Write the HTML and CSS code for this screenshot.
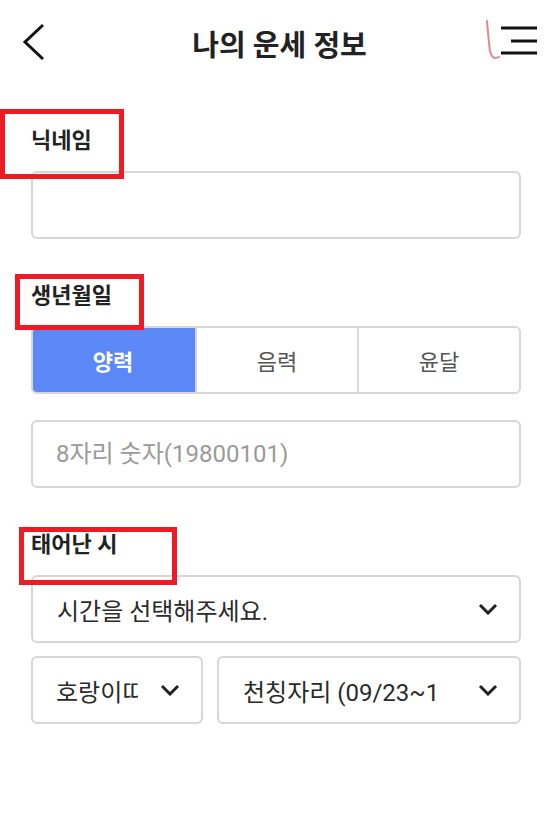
FILE: index.html
```html
<!DOCTYPE html>
<html lang="ko">
<head>
    <meta charset="UTF-8">
    <meta name="viewport" content="width=device-width, initial-scale=1.0">
    <title>나의 운세 정보</title>
    <link rel="stylesheet" href="styles.css">
</head>
<body>
    <header class="topbar">
        <a class="back" href="#">
            <svg width="24" height="40" viewBox="0 0 24 40"><polyline points="21,3 3,20 21,37" fill="none" stroke="#111" stroke-width="3"/></svg>
        </a>
        <h1 class="title">나의 운세 정보</h1>
        <div class="menu">
            <svg class="pen" width="20" height="44" viewBox="0 0 20 44"><path d="M2 2 C3 14 4 26 5 32 C6 36 8 39 10 39 C12 39 13 38 14 38" fill="none" stroke="#e0707a" stroke-width="2" stroke-linecap="round" opacity="0.85"/></svg>
            <svg width="36" height="32" viewBox="0 0 36 32"><g stroke="#111" stroke-width="3"><line x1="0" y1="3" x2="36" y2="3"/><line x1="10" y1="16" x2="36" y2="16"/><line x1="0" y1="28" x2="36" y2="28"/></g></svg>
        </div>
    </header>

    <main class="form">
        <section class="field">
            <div class="label">닉네임<span class="mark mark-nick"></span></div>
            <input class="box" type="text">
        </section>

        <section class="field">
            <div class="label">생년월일<span class="mark mark-birth"></span></div>
            <div class="segments">
                <button class="seg active">양력</button>
                <button class="seg">음력</button>
                <button class="seg">윤달</button>
            </div>
            <input class="box birth" type="text" placeholder="8자리 숫자(19800101)">
        </section>

        <section class="field">
            <div class="label">태어난 시<span class="mark mark-time"></span></div>
            <div class="select">
                <span class="select-text">시간을 선택해주세요.</span>
                <svg class="caret" width="20" height="12" viewBox="0 0 20 12"><polyline points="2,2 10,10 18,2" fill="none" stroke="#222" stroke-width="3"/></svg>
            </div>
            <div class="select-row">
                <div class="select small">
                    <span class="select-text">호랑이띠</span>
                    <svg class="caret" width="20" height="12" viewBox="0 0 20 12"><polyline points="2,2 10,10 18,2" fill="none" stroke="#222" stroke-width="3"/></svg>
                </div>
                <div class="select wide">
                    <span class="select-text">천칭자리 (09/23~10/22)</span>
                    <svg class="caret" width="20" height="12" viewBox="0 0 20 12"><polyline points="2,2 10,10 18,2" fill="none" stroke="#222" stroke-width="3"/></svg>
                </div>
            </div>
        </section>
    </main>
</body>
</html>
```

FILE: styles.css
```css
body {
    margin: 0;
    background-color: #fff;
    color: #222;
    font-family: Roboto, "Noto Sans CJK KR", sans-serif;
}
.topbar {
    display: grid;
    grid-template-columns: 1fr auto 1fr;
    align-items: center;
    height: 84px;
    padding: 0 11px 0 22px;
}
.back {
    display: flex;
    align-items: center;
}
.title {
    margin: 0;
    font-size: 29px;
    font-weight: 700;
    color: #222;
    padding-top: 2px;
}
.menu {
    justify-self: end;
    position: relative;
    display: flex;
    padding-bottom: 2px;
}
.pen {
    position: absolute;
    left: -16px;
    top: -6px;
}
.form {
    padding: 0 27px 0 31px;
}
.field {
    margin-top: 42px;
}
.label {
    position: relative;
    font-size: 22px;
    font-weight: 700;
    line-height: 30px;
    height: 30px;
    margin-bottom: 15px;
    color: #222;
}
.mark {
    position: absolute;
    border: 5px solid #ed1c24;
    box-sizing: border-box;
    z-index: 2;
}
.mark-nick {
    left: -31px;
    top: -17px;
    width: 124px;
    height: 70px;
}
.mark-birth {
    left: -16px;
    top: -7px;
    width: 129px;
    height: 56px;
}
.mark-time {
    left: -12px;
    top: -3px;
    width: 158px;
    height: 58px;
}
.box {
    display: block;
    width: 100%;
    height: 68px;
    box-sizing: border-box;
    border: 2px solid #d6d6d6;
    border-radius: 6px;
    padding: 0 23px;
    font-family: inherit;
    font-size: 24px;
    color: #333;
    outline: none;
}
.box::placeholder {
    color: #9a9a9a;
}
.birth {
    margin-top: 26px;
}
.segments {
    display: grid;
    grid-template-columns: 1fr 1fr 1fr;
    height: 68px;
    border: 2px solid #d6d6d6;
    border-radius: 6px;
    overflow: hidden;
    box-sizing: border-box;
}
.seg {
    border: none;
    border-left: 2px solid #d6d6d6;
    background-color: #fff;
    font-family: inherit;
    font-size: 22px;
    color: #555;
    padding: 0;
}
.seg:first-child {
    border-left: none;
}
.seg.active {
    background-color: #5b88f6;
    color: #fff;
    font-weight: 700;
    margin: -2px 0 -2px -2px;
}
.select {
    display: flex;
    align-items: center;
    gap: 22px;
    height: 68px;
    box-sizing: border-box;
    border: 2px solid #d6d6d6;
    border-radius: 6px;
    padding: 0 21px 0 24px;
    min-width: 0;
}
.select-text {
    flex: 1;
    min-width: 0;
    overflow: hidden;
    white-space: nowrap;
    font-size: 24px;
    color: #2a2a2a;
}
.caret {
    flex-shrink: 0;
}
.select-row {
    display: flex;
    gap: 14px;
    margin-top: 13px;
}
.select.small {
    width: 172px;
    flex-shrink: 0;
    padding-left: 23px;
}
.select.wide {
    flex: 1;
    gap: 39px;
}
```
